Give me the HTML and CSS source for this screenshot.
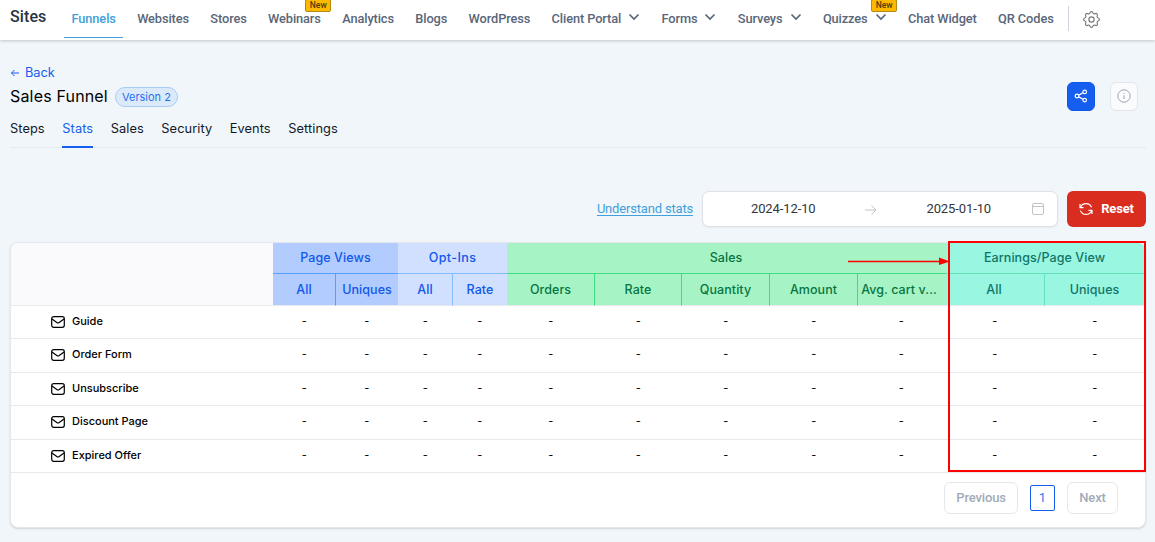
FILE: index.html
```html
<!DOCTYPE html>
<html lang="en">

<head>
    <meta charset="UTF-8">
    <meta name="viewport" content="width=device-width, initial-scale=1.0">
    <title>Sales Funnel - Stats</title>
    <link rel="stylesheet" href="styles.css">
</head>

<body>

    <header class="topbar">
        <h1>Sites</h1>
        <nav>
            <a class="active">Funnels</a>
            <a>Websites</a>
            <a>Stores</a>
            <a>Webinars<span class="new">New</span></a>
            <a>Analytics</a>
            <a>Blogs</a>
            <a>WordPress</a>
            <a>Client Portal<svg class="chevron" viewBox="0 0 12 8"><path d="M1.5 1.5 6 6l4.5-4.5"/></svg></a>
            <a>Forms<svg class="chevron" viewBox="0 0 12 8"><path d="M1.5 1.5 6 6l4.5-4.5"/></svg></a>
            <a>Surveys<svg class="chevron" viewBox="0 0 12 8"><path d="M1.5 1.5 6 6l4.5-4.5"/></svg></a>
            <a>Quizzes<svg class="chevron" viewBox="0 0 12 8"><path d="M1.5 1.5 6 6l4.5-4.5"/></svg><span class="new">New</span></a>
            <a>Chat Widget</a>
            <a>QR Codes</a>
        </nav>
        <div class="gear">
            <svg viewBox="0 0 24 24"><circle cx="12" cy="12" r="3"/><path d="M10.33 4.32c.42-1.76 2.92-1.76 3.34 0a1.72 1.72 0 0 0 2.57 1.06c1.54-.94 3.31.83 2.37 2.37a1.72 1.72 0 0 0 1.07 2.57c1.75.43 1.75 2.93 0 3.36a1.72 1.72 0 0 0-1.07 2.57c.94 1.54-.83 3.31-2.37 2.37a1.72 1.72 0 0 0-2.57 1.07c-.43 1.75-2.93 1.75-3.35 0a1.72 1.72 0 0 0-2.57-1.07c-1.55.94-3.31-.83-2.37-2.37a1.72 1.72 0 0 0-1.07-2.57c-1.75-.43-1.75-2.93 0-3.35a1.72 1.72 0 0 0 1.07-2.57c-.94-1.55.83-3.31 2.37-2.37 1 .61 2.3.07 2.57-1.07z"/></svg>
        </div>
    </header>

    <main>
        <a class="back"><svg viewBox="0 0 10 10"><path d="M9 5H1.5M4.5 2l-3 3 3 3"/></svg>Back</a>

        <div class="title-row">
            <h2>Sales Funnel</h2>
            <span class="version">Version 2</span>
            <div class="actions">
                <button class="share"><svg viewBox="0 0 14 14"><circle cx="3" cy="7" r="1.8"/><circle cx="10.7" cy="2.9" r="1.8"/><circle cx="10.7" cy="11.1" r="1.8"/><path d="M4.6 6.1l4.5-2.4M4.6 7.9l4.5 2.4"/></svg></button>
                <button class="info"><svg viewBox="0 0 14 14"><circle cx="7" cy="7" r="6.2"/><path d="M7 6.3v3.7M7 4v.9"/></svg></button>
            </div>
        </div>

        <div class="tabs">
            <a>Steps</a>
            <a class="active">Stats</a>
            <a>Sales</a>
            <a>Security</a>
            <a>Events</a>
            <a>Settings</a>
        </div>

        <div class="filters">
            <a class="understand">Understand stats</a>
            <div class="dates">
                <span>2024-12-10</span>
                <svg class="to" viewBox="0 0 12 12"><path d="M0 6h11M6.5 1.5 11 6l-4.5 4.5"/></svg>
                <span>2025-01-10</span>
                <svg class="calendar" viewBox="0 0 12 12"><rect x=".5" y=".5" width="11" height="11" rx="1.5"/><path d="M.5 3.5h11"/></svg>
            </div>
            <button class="reset"><svg viewBox="0 0 14 14"><path d="M1 2v3.6h3.6M1.4 5.4A6 6 0 0 1 12.6 5.4M13 12V8.4H9.4M12.6 8.6A6 6 0 0 1 1.4 8.6"/></svg><span>Reset</span></button>
        </div>

        <div class="card">
            <table>
                <colgroup>
                    <col class="c-name">
                    <col class="c-pv"><col class="c-pv2">
                    <col class="c-opt"><col class="c-opt2">
                    <col class="c-sales"><col class="c-sales2"><col class="c-sales"><col class="c-sales"><col class="c-sales2">
                    <col class="c-earn"><col class="c-earn">
                </colgroup>
                <thead>
                    <tr>
                        <th rowspan="2"></th>
                        <th class="views" colspan="2">Page Views</th>
                        <th class="optins" colspan="2">Opt-Ins</th>
                        <th class="sales" colspan="5">Sales</th>
                        <th class="earnings" colspan="2">Earnings/Page View</th>
                    </tr>
                    <tr>
                        <th class="views split">All</th>
                        <th class="views">Uniques</th>
                        <th class="optins split">All</th>
                        <th class="optins">Rate</th>
                        <th class="sales split">Orders</th>
                        <th class="sales split">Rate</th>
                        <th class="sales split">Quantity</th>
                        <th class="sales split">Amount</th>
                        <th class="sales cart">Avg. cart v...</th>
                        <th class="earnings split">All</th>
                        <th class="earnings">Uniques</th>
                    </tr>
                </thead>
                <tbody id="rows"></tbody>
            </table>

            <div class="pager">
                <button>Previous</button>
                <span class="page">1</span>
                <button>Next</button>
            </div>

            <div class="highlight"></div>
            <svg class="pointer" viewBox="0 0 102 8"><path class="line" d="M0 4.5h94"/><path class="head" d="M91 .5 102 4.5 91 8z"/></svg>
        </div>
    </main>

    <script>
        var pages = ["Guide", "Order Form", "Unsubscribe", "Discount Page", "Expired Offer"]
        var mail = '<svg class="mail" viewBox="0 0 14 12"><rect x=".7" y=".7" width="12.6" height="10.6" rx="2"/><path d="M1 3l4.8 3.4q1.2.8 2.4 0L13 3"/></svg>'
        var html = ""

        pages.forEach(function (name) {
            html += '<tr><td class="name">' + mail + name + "</td>"
            for (var i = 0; i < 11; i++) {
                html += "<td>-</td>"
            }
            html += "</tr>"
        })

        document.getElementById("rows").innerHTML = html
    </script>

</body>

</html>
```

FILE: styles.css
```css
* {
    box-sizing: border-box;
}

body {
    margin: 0;
    height: 542px;
    overflow: hidden;
    background-color: #f1f6fa;
    font-family: Inter, sans-serif;
    font-size: 13px;
    color: #101828;
}

svg {
    fill: none;
    stroke: currentColor;
    flex: none;
}

h1,
h2 {
    margin: 0;
    font-weight: 500;
}

button {
    font-family: inherit;
    display: flex;
    align-items: center;
    justify-content: center;
    padding: 0;
}

.topbar {
    display: flex;
    height: 40px;
    padding-left: 10px;
    background-color: #fff;
    box-shadow: 0 1px 3px rgba(0, 0, 0, 0.2);
    font-family: Roboto, sans-serif;
}

.topbar h1 {
    width: 54px;
    font-size: 16px;
    line-height: 33px;
    letter-spacing: 0.1px;
    color: #2a3342;
}

.topbar nav {
    display: flex;
    gap: 6.35px;
}

.topbar nav a {
    position: relative;
    display: flex;
    height: 38px;
    padding: 0 7.5px;
    line-height: 37px;
    font-size: 12.8px;
    font-weight: 500;
    letter-spacing: -0.1px;
    color: #5a6679;
    white-space: nowrap;
}

.topbar nav a.active {
    color: #419fdb;
    border-bottom: 1px solid #419fdb;
}

.chevron {
    width: 12px;
    height: 8px;
    margin: 13px 0 0 7px;
    stroke-width: 1.7;
}

.new {
    position: absolute;
    top: -1px;
    right: -3px;
    width: 26px;
    height: 13px;
    border: 1px solid #b58a12;
    border-radius: 2px;
    background-color: #fdb900;
    color: #4f3d07;
    font-size: 8.5px;
    line-height: 11px;
    letter-spacing: 0;
    text-align: center;
}

.gear {
    display: flex;
    align-items: center;
    height: 25px;
    margin: 6px 0 0 7px;
    padding-left: 12px;
    border-left: 1px solid #d0d5dd;
    color: #777;
}

.gear svg {
    width: 21px;
    height: 21px;
    margin-top: 1px;
    stroke-width: 1.3;
}

main {
    padding: 23px 9px 0 10px;
}

.back {
    display: flex;
    align-items: center;
    gap: 5px;
    height: 18px;
    color: #155eef;
    font-size: 12.8px;
}

.back svg {
    width: 10px;
    height: 10px;
    margin-top: 1px;
}

.title-row {
    display: flex;
    align-items: center;
    height: 30px;
}

.title-row h2 {
    font-size: 16px;
    font-weight: 400;
    letter-spacing: 0.17px;
    color: #000;
}

.version {
    width: 63px;
    height: 20px;
    margin: 1px 0 0 7px;
    border: 1px solid #a9cbf5;
    border-radius: 10px;
    background-color: #dbeafb;
    color: #2970e8;
    font-size: 11px;
    line-height: 18px;
    text-align: center;
}

.actions {
    display: flex;
    gap: 15px;
    margin: 0 8px 0 auto;
}

.actions button {
    width: 28px;
    height: 29px;
    border-radius: 6px;
}

.actions svg {
    width: 14px;
    height: 14px;
}

.share {
    border: 1px solid #0e55e8;
    background-color: #155eef;
    color: #fff;
}

.share svg {
    stroke-width: 1.2;
}

.info {
    border: 1px solid #e2e6ea;
    background-color: #fafbfd;
    color: #98a2b3;
}

.tabs {
    display: flex;
    gap: 17.6px;
    height: 36px;
    margin-top: 1px;
    border-bottom: 1px solid #e6eaf0;
    line-height: 33px;
    font-size: 12.8px;
    letter-spacing: 0.07px;
}

.tabs a {
    height: 36px;
}

.tabs a.active {
    color: #155eef;
    border-bottom: 2px solid #155eef;
}

.filters {
    display: flex;
    align-items: center;
    justify-content: flex-end;
    height: 36px;
    margin-top: 43px;
    font-family: Roboto, sans-serif;
}

.understand {
    margin-top: -1px;
    color: #419fdb;
    text-decoration: underline;
    text-underline-offset: 2px;
    font-size: 13px;
    letter-spacing: -0.18px;
}

.dates {
    display: flex;
    align-items: center;
    width: 356px;
    height: 36px;
    margin: 0 9px;
    padding: 0 13px 0 0;
    border: 1px solid #e0e0e6;
    border-radius: 7px;
    background-color: #fff;
    box-shadow: 0 1px 2px rgba(16, 24, 40, 0.05);
    color: #333639;
    font-size: 13px;
}

.dates span {
    width: 161px;
    padding-bottom: 2px;
    letter-spacing: -0.1px;
    text-align: center;
}

.dates span:nth-of-type(2) {
    width: 165px;
}

.dates .to {
    width: 12px;
    height: 12px;
    margin: 1px 0 0 1px;
    color: #c2c2c2;
}

.dates .calendar {
    width: 12px;
    height: 12px;
    margin-left: -9px;
    color: #c2c2c2;
}

.reset {
    gap: 8px;
    width: 79px;
    height: 36px;
    border: 0;
    border-radius: 6px;
    background-color: #d92d20;
    color: #fff;
    font-family: Roboto, sans-serif;
    font-size: 13px;
    font-weight: 700;
    letter-spacing: -0.15px;
}

.reset span {
    padding-bottom: 1px;
}

.reset svg {
    width: 14px;
    height: 14px;
    stroke-width: 1.2;
}

.card {
    position: relative;
    height: 286px;
    margin-top: 15px;
    border: 1px solid #e4e7ec;
    border-radius: 8px;
    background-color: #fff;
    box-shadow: 0 1px 2px rgba(16, 24, 40, 0.15);
}

table {
    width: 1134px;
    table-layout: fixed;
    border-collapse: separate;
    border-spacing: 0;
}

.c-name { width: 262px; }
.c-pv { width: 63px; }
.c-pv2 { width: 62px; }
.c-opt { width: 55px; }
.c-opt2 { width: 54px; }
.c-sales { width: 88px; }
.c-sales2 { width: 87px; }
.c-earn { width: 100px; }

th {
    height: 32px;
    padding: 0;
    border-bottom: 1px solid #e8e8ed;
    background-color: #fafafc;
    font-size: 12.5px;
    font-weight: 500;
    letter-spacing: 0.07px;
    white-space: nowrap;
}

tr:first-child th:not([rowspan]) {
    height: 31px;
    padding-bottom: 2px;
}

th[rowspan] {
    border-radius: 7px 0 0 0;
}

th.views {
    background-color: #b2ccff;
    color: #1057ea;
}

th.optins {
    background-color: #d1e0ff;
    color: #1057ea;
}

th.sales {
    background-color: #a6f4c5;
    color: #087443;
}

th.cart {
    padding-right: 5px;
}

th.earnings {
    padding-right: 1px;
    background-color: #99f6e0;
    color: #107569;
}

tr:first-child .views { border-bottom-color: #53a0fd; }
tr:first-child .optins { border-bottom-color: #84bdff; letter-spacing: 0.4px; }
tr:first-child .sales { border-bottom-color: #3fdd80; }
tr:first-child .earnings { border-bottom-color: #66e0b8; border-top-right-radius: 7px; }

.views.split { border-right: 1px solid #53a0fd; }
.optins.split { border-right: 1px solid #84bdff; }
.sales.split { border-right: 1px solid #3fdd80; }
.earnings.split { border-right: 1px solid #66e0b8; }

td {
    height: 33.4px;
    padding: 0 0.5px 2.4px 0;
    border-bottom: 1px solid #e8e8ed;
    color: #000;
    font-size: 11px;
    text-align: center;
}

td.name {
    padding-left: 40px;
    font-weight: 500;
    text-align: left;
}

.mail {
    width: 14px;
    height: 12px;
    margin-right: 7px;
    vertical-align: -3px;
    stroke-width: 1.2;
}

.pager {
    display: flex;
    align-items: center;
    justify-content: flex-end;
    gap: 12px;
    height: 50px;
    padding-right: 27px;
    font-family: Roboto, sans-serif;
}

.pager button {
    width: 74px;
    height: 32px;
    border: 1px solid #e4e7ec;
    border-radius: 6px;
    background-color: #fff;
    color: #a3abb8;
    font-family: inherit;
    font-size: 13px;
    font-weight: 500;
    letter-spacing: -0.15px;
}

.pager button:last-child {
    width: 51px;
}

.page {
    width: 25px;
    height: 26px;
    border: 1px solid #155eef;
    border-radius: 2px;
    color: #2878f0;
    font-size: 13px;
    line-height: 24px;
    text-align: center;
}

/* red frame and arrow drawn over the earnings columns */
.highlight {
    position: absolute;
    top: -2px;
    right: -1px;
    width: 198px;
    height: 231px;
    border: 2px solid #f00;
}

.pointer {
    position: absolute;
    top: 14px;
    left: 837px;
    width: 102px;
    height: 8px;
    color: #f00;
}

.pointer .line {
    stroke-width: 1.3;
}

.pointer .head {
    fill: #f00;
    stroke: none;
}
```
